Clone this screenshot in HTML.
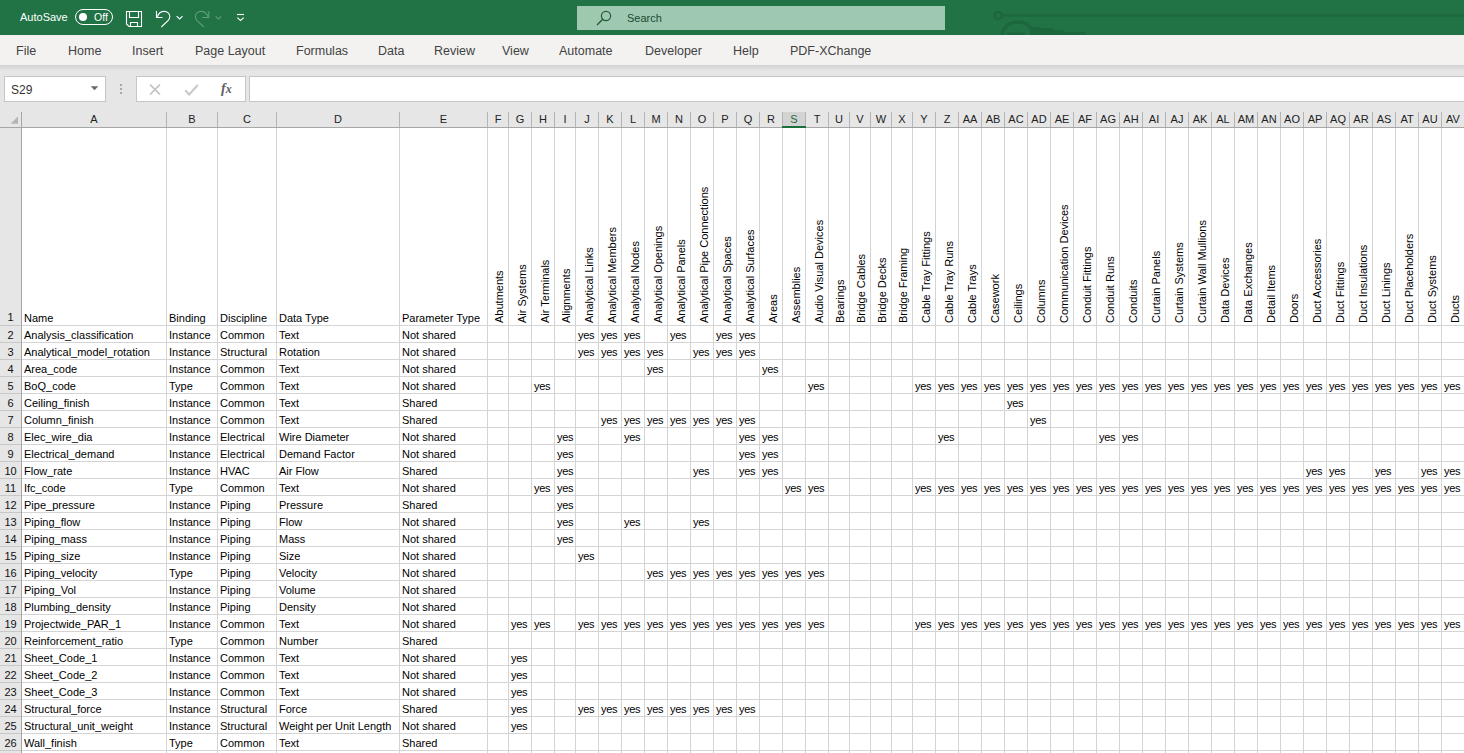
<!DOCTYPE html><html><head><meta charset="utf-8"><style>
*{margin:0;padding:0;box-sizing:border-box}
html,body{width:1464px;height:753px;overflow:hidden;background:#fff;font-family:"Liberation Sans",sans-serif}
.a{position:absolute}
.t{position:absolute;white-space:nowrap;font-size:11px;line-height:17px;color:#000}
.v{position:absolute;white-space:nowrap;font-size:11px;line-height:13px;color:#000;transform:rotate(-90deg);transform-origin:0 0}
.ch{position:absolute;top:112px;height:15px;font-size:11px;line-height:15px;text-align:center;color:#111}
.rn{position:absolute;left:0;width:21px;font-size:11px;line-height:17px;text-align:center;color:#111}
.gv{position:absolute;width:1px;background:#d4d4d4}
.gh{position:absolute;height:1px;background:#d4d4d4}
.menu{position:absolute;top:41px;font-size:12.5px;line-height:20px;color:#424242}
</style></head><body>

<div class="a" style="left:0;top:0;width:1464px;height:35px;background:#217346"></div>
<div class="a" style="left:577px;top:6px;width:368px;height:24px;background:#9fc8b0"></div>
<div class="a" style="left:627px;top:9px;font-size:11px;line-height:19px;color:#1a4a30">Search</div>
<svg class="a" style="left:594px;top:9px" width="20" height="18" viewBox="0 0 20 18"><circle cx="12" cy="7" r="4.6" fill="none" stroke="#1f5a3a" stroke-width="1.2"/><line x1="8.7" y1="10.3" x2="3" y2="16" stroke="#1f5a3a" stroke-width="1.3"/></svg>
<div class="a" style="left:20px;top:8px;font-size:11px;line-height:19px;color:#fff">AutoSave</div>
<div class="a" style="left:75px;top:9px;width:38px;height:16px;border:1px solid #fff;border-radius:8px"></div>
<div class="a" style="left:79px;top:13px;width:8px;height:8px;border-radius:50%;background:#fff"></div>
<div class="a" style="left:94px;top:8px;font-size:10.5px;line-height:19px;color:#fff">Off</div>
<svg class="a" style="left:0;top:0" width="260" height="35" viewBox="0 0 260 35" fill="none" stroke-width="1.1"><g stroke="#fff"><path d="M126.5 11.5H141.5V26.5H129L126.5 24Z"/><path d="M129.5 11.5V17.5H138.5V11.5"/><path d="M130.5 26.5V22.5H137.5V26.5"/><path d="M156.5 11V17.5H162.6"/><path d="M157.3 16.9C158.5 13.2 161.2 11.4 164.2 11.4C167.4 11.4 169.8 13.8 169.8 16.8C169.8 18.5 169 19.6 168 20.7L161.3 27"/><path d="M176.6 16.1L179.6 18.9L182.6 16.1"/><path d="M237 14.5H244"/><path d="M237.3 17.6L240.5 20.5L243.7 17.6"/></g><g stroke="#5f9c79"><path d="M208.8 11.2V17.5H202.1"/><path d="M208 16.9C206.8 13.2 204 11.4 201 11.4C197.8 11.4 195.3 13.8 195.3 16.8C195.3 18.5 196.1 19.6 197.1 20.7L203.8 27"/><path d="M215.6 16.3L218.4 18.9L221.2 16.3"/></g></svg>
<svg class="a" style="left:960px;top:0" width="504" height="35" viewBox="0 0 504 35"><g fill="none" stroke="#1d673e" stroke-width="2.4"><circle cx="38.3" cy="15.6" r="3.5"/><path d="M47 34h18" stroke-width="3"/><line x1="42" y1="15.6" x2="504" y2="15.6"/><path d="M42 36a16 14 0 0 1 32 0" stroke-width="3.4"/></g><path d="M70 27h10v1h14v2h10v2h22v3H70z" fill="#1d673e"/></svg>
<div class="a" style="left:0;top:35px;width:1464px;height:30px;background:#f3f2f1"></div>
<div class="a" style="left:0;top:65px;width:1464px;height:62px;background:#e6e6e6"></div>
<div class="a" style="left:0;top:65px;width:1464px;height:6px;background:linear-gradient(#d2d2d2,#e6e6e6)"></div>
<div class="menu" style="left:16px">File</div>
<div class="menu" style="left:68px">Home</div>
<div class="menu" style="left:132px">Insert</div>
<div class="menu" style="left:195px">Page Layout</div>
<div class="menu" style="left:296px">Formulas</div>
<div class="menu" style="left:378px">Data</div>
<div class="menu" style="left:434px">Review</div>
<div class="menu" style="left:502px">View</div>
<div class="menu" style="left:559px">Automate</div>
<div class="menu" style="left:645px">Developer</div>
<div class="menu" style="left:733px">Help</div>
<div class="menu" style="left:790px">PDF-XChange</div>
<div class="a" style="left:4px;top:76px;width:102px;height:26px;background:#fff;border:1px solid #c6c6c6"></div>
<div class="a" style="left:11px;top:80px;font-size:12px;line-height:20px;color:#333">S29</div>
<svg class="a" style="left:90px;top:86px" width="9" height="5" viewBox="0 0 9 5"><path d="M0.7 0.2h7.6L4.5 4.3z" fill="#6a6a6a"/></svg>
<div class="a" style="left:120px;top:84px;width:2px;height:2px;background:#a8a8a8"></div>
<div class="a" style="left:120px;top:88px;width:2px;height:2px;background:#a8a8a8"></div>
<div class="a" style="left:120px;top:92px;width:2px;height:2px;background:#a8a8a8"></div>
<div class="a" style="left:136px;top:76px;width:110px;height:26px;background:#fff;border:1px solid #c6c6c6"></div>
<svg class="a" style="left:149px;top:84px" width="12" height="11" viewBox="0 0 12 11" fill="none" stroke="#c2c2c2" stroke-width="1.7"><path d="M1 0.5l10 10M11 0.5l-10 10"/></svg>
<svg class="a" style="left:184px;top:84px" width="15" height="12" viewBox="0 0 15 12" fill="none" stroke="#cacaca" stroke-width="2.2"><path d="M1.2 6.2l4 4.3 8.6-9.6"/></svg>
<div class="a" style="left:221px;top:81px;font-family:'Liberation Serif',serif;font-style:italic;font-weight:bold;font-size:14px;line-height:16px;color:#606060">f<span style="font-size:12px">x</span></div>
<div class="a" style="left:249px;top:76px;width:1220px;height:26px;background:#fff;border:1px solid #c6c6c6"></div>
<div class="a" style="left:0;top:127px;width:1464px;height:1px;background:#a6a6a6"></div>
<div class="a" style="left:21px;top:112px;width:1px;height:641px;background:#a6a6a6"></div>
<svg class="a" style="left:10px;top:116px" width="9" height="9" viewBox="0 0 9 9"><path d="M8 0.5V7.7H0.6z" fill="#b4b4b4"/></svg>
<div class="a" style="left:782px;top:112px;width:24px;height:15px;background:#d3d3d3"></div>
<div class="ch" style="left:22px;width:144px;color:#222">A</div>
<div class="a" style="left:166px;top:112px;width:1px;height:15px;background:#b4b4b4"></div>
<div class="ch" style="left:167px;width:50px;color:#222">B</div>
<div class="a" style="left:217px;top:112px;width:1px;height:15px;background:#b4b4b4"></div>
<div class="ch" style="left:218px;width:58px;color:#222">C</div>
<div class="a" style="left:276px;top:112px;width:1px;height:15px;background:#b4b4b4"></div>
<div class="ch" style="left:277px;width:122px;color:#222">D</div>
<div class="a" style="left:399px;top:112px;width:1px;height:15px;background:#b4b4b4"></div>
<div class="ch" style="left:400px;width:87px;color:#222">E</div>
<div class="a" style="left:487px;top:112px;width:1px;height:15px;background:#b4b4b4"></div>
<div class="ch" style="left:488px;width:20px;color:#222">F</div>
<div class="a" style="left:508px;top:112px;width:1px;height:15px;background:#b4b4b4"></div>
<div class="ch" style="left:509px;width:22px;color:#222">G</div>
<div class="a" style="left:531px;top:112px;width:1px;height:15px;background:#b4b4b4"></div>
<div class="ch" style="left:532px;width:22px;color:#222">H</div>
<div class="a" style="left:554px;top:112px;width:1px;height:15px;background:#b4b4b4"></div>
<div class="ch" style="left:555px;width:20px;color:#222">I</div>
<div class="a" style="left:575px;top:112px;width:1px;height:15px;background:#b4b4b4"></div>
<div class="ch" style="left:576px;width:22px;color:#222">J</div>
<div class="a" style="left:598px;top:112px;width:1px;height:15px;background:#b4b4b4"></div>
<div class="ch" style="left:599px;width:22px;color:#222">K</div>
<div class="a" style="left:621px;top:112px;width:1px;height:15px;background:#b4b4b4"></div>
<div class="ch" style="left:622px;width:22px;color:#222">L</div>
<div class="a" style="left:644px;top:112px;width:1px;height:15px;background:#b4b4b4"></div>
<div class="ch" style="left:645px;width:22px;color:#222">M</div>
<div class="a" style="left:667px;top:112px;width:1px;height:15px;background:#b4b4b4"></div>
<div class="ch" style="left:668px;width:22px;color:#222">N</div>
<div class="a" style="left:690px;top:112px;width:1px;height:15px;background:#b4b4b4"></div>
<div class="ch" style="left:691px;width:22px;color:#222">O</div>
<div class="a" style="left:713px;top:112px;width:1px;height:15px;background:#b4b4b4"></div>
<div class="ch" style="left:714px;width:22px;color:#222">P</div>
<div class="a" style="left:736px;top:112px;width:1px;height:15px;background:#b4b4b4"></div>
<div class="ch" style="left:737px;width:22px;color:#222">Q</div>
<div class="a" style="left:759px;top:112px;width:1px;height:15px;background:#b4b4b4"></div>
<div class="ch" style="left:760px;width:22px;color:#222">R</div>
<div class="a" style="left:782px;top:112px;width:1px;height:15px;background:#b4b4b4"></div>
<div class="ch" style="left:783px;width:22px;color:#1e6b3f">S</div>
<div class="a" style="left:805px;top:112px;width:1px;height:15px;background:#b4b4b4"></div>
<div class="ch" style="left:806px;width:22px;color:#222">T</div>
<div class="a" style="left:828px;top:112px;width:1px;height:15px;background:#b4b4b4"></div>
<div class="ch" style="left:829px;width:20px;color:#222">U</div>
<div class="a" style="left:849px;top:112px;width:1px;height:15px;background:#b4b4b4"></div>
<div class="ch" style="left:850px;width:20px;color:#222">V</div>
<div class="a" style="left:870px;top:112px;width:1px;height:15px;background:#b4b4b4"></div>
<div class="ch" style="left:871px;width:20px;color:#222">W</div>
<div class="a" style="left:891px;top:112px;width:1px;height:15px;background:#b4b4b4"></div>
<div class="ch" style="left:892px;width:20px;color:#222">X</div>
<div class="a" style="left:912px;top:112px;width:1px;height:15px;background:#b4b4b4"></div>
<div class="ch" style="left:913px;width:22px;color:#222">Y</div>
<div class="a" style="left:935px;top:112px;width:1px;height:15px;background:#b4b4b4"></div>
<div class="ch" style="left:936px;width:22px;color:#222">Z</div>
<div class="a" style="left:958px;top:112px;width:1px;height:15px;background:#b4b4b4"></div>
<div class="ch" style="left:959px;width:22px;color:#222">AA</div>
<div class="a" style="left:981px;top:112px;width:1px;height:15px;background:#b4b4b4"></div>
<div class="ch" style="left:982px;width:22px;color:#222">AB</div>
<div class="a" style="left:1004px;top:112px;width:1px;height:15px;background:#b4b4b4"></div>
<div class="ch" style="left:1005px;width:22px;color:#222">AC</div>
<div class="a" style="left:1027px;top:112px;width:1px;height:15px;background:#b4b4b4"></div>
<div class="ch" style="left:1028px;width:22px;color:#222">AD</div>
<div class="a" style="left:1050px;top:112px;width:1px;height:15px;background:#b4b4b4"></div>
<div class="ch" style="left:1051px;width:22px;color:#222">AE</div>
<div class="a" style="left:1073px;top:112px;width:1px;height:15px;background:#b4b4b4"></div>
<div class="ch" style="left:1074px;width:22px;color:#222">AF</div>
<div class="a" style="left:1096px;top:112px;width:1px;height:15px;background:#b4b4b4"></div>
<div class="ch" style="left:1097px;width:22px;color:#222">AG</div>
<div class="a" style="left:1119px;top:112px;width:1px;height:15px;background:#b4b4b4"></div>
<div class="ch" style="left:1120px;width:22px;color:#222">AH</div>
<div class="a" style="left:1142px;top:112px;width:1px;height:15px;background:#b4b4b4"></div>
<div class="ch" style="left:1143px;width:22px;color:#222">AI</div>
<div class="a" style="left:1165px;top:112px;width:1px;height:15px;background:#b4b4b4"></div>
<div class="ch" style="left:1166px;width:22px;color:#222">AJ</div>
<div class="a" style="left:1188px;top:112px;width:1px;height:15px;background:#b4b4b4"></div>
<div class="ch" style="left:1189px;width:22px;color:#222">AK</div>
<div class="a" style="left:1211px;top:112px;width:1px;height:15px;background:#b4b4b4"></div>
<div class="ch" style="left:1212px;width:22px;color:#222">AL</div>
<div class="a" style="left:1234px;top:112px;width:1px;height:15px;background:#b4b4b4"></div>
<div class="ch" style="left:1235px;width:22px;color:#222">AM</div>
<div class="a" style="left:1257px;top:112px;width:1px;height:15px;background:#b4b4b4"></div>
<div class="ch" style="left:1258px;width:22px;color:#222">AN</div>
<div class="a" style="left:1280px;top:112px;width:1px;height:15px;background:#b4b4b4"></div>
<div class="ch" style="left:1281px;width:22px;color:#222">AO</div>
<div class="a" style="left:1303px;top:112px;width:1px;height:15px;background:#b4b4b4"></div>
<div class="ch" style="left:1304px;width:22px;color:#222">AP</div>
<div class="a" style="left:1326px;top:112px;width:1px;height:15px;background:#b4b4b4"></div>
<div class="ch" style="left:1327px;width:22px;color:#222">AQ</div>
<div class="a" style="left:1349px;top:112px;width:1px;height:15px;background:#b4b4b4"></div>
<div class="ch" style="left:1350px;width:22px;color:#222">AR</div>
<div class="a" style="left:1372px;top:112px;width:1px;height:15px;background:#b4b4b4"></div>
<div class="ch" style="left:1373px;width:22px;color:#222">AS</div>
<div class="a" style="left:1395px;top:112px;width:1px;height:15px;background:#b4b4b4"></div>
<div class="ch" style="left:1396px;width:22px;color:#222">AT</div>
<div class="a" style="left:1418px;top:112px;width:1px;height:15px;background:#b4b4b4"></div>
<div class="ch" style="left:1419px;width:22px;color:#222">AU</div>
<div class="a" style="left:1441px;top:112px;width:1px;height:15px;background:#b4b4b4"></div>
<div class="ch" style="left:1442px;width:22px;color:#222">AV</div>
<div class="a" style="left:1464px;top:112px;width:1px;height:15px;background:#b4b4b4"></div>
<div class="a" style="left:782px;top:126px;width:24px;height:2px;background:#19703d"></div>
<div class="a" style="left:0;top:128px;width:21px;height:625px;background:#e6e6e6"></div>
<div class="gv" style="left:166px;top:128px;height:625px"></div>
<div class="gv" style="left:217px;top:128px;height:625px"></div>
<div class="gv" style="left:276px;top:128px;height:625px"></div>
<div class="gv" style="left:399px;top:128px;height:625px"></div>
<div class="gv" style="left:487px;top:128px;height:625px"></div>
<div class="gv" style="left:508px;top:128px;height:625px"></div>
<div class="gv" style="left:531px;top:128px;height:625px"></div>
<div class="gv" style="left:554px;top:128px;height:625px"></div>
<div class="gv" style="left:575px;top:128px;height:625px"></div>
<div class="gv" style="left:598px;top:128px;height:625px"></div>
<div class="gv" style="left:621px;top:128px;height:625px"></div>
<div class="gv" style="left:644px;top:128px;height:625px"></div>
<div class="gv" style="left:667px;top:128px;height:625px"></div>
<div class="gv" style="left:690px;top:128px;height:625px"></div>
<div class="gv" style="left:713px;top:128px;height:625px"></div>
<div class="gv" style="left:736px;top:128px;height:625px"></div>
<div class="gv" style="left:759px;top:128px;height:625px"></div>
<div class="gv" style="left:782px;top:128px;height:625px"></div>
<div class="gv" style="left:805px;top:128px;height:625px"></div>
<div class="gv" style="left:828px;top:128px;height:625px"></div>
<div class="gv" style="left:849px;top:128px;height:625px"></div>
<div class="gv" style="left:870px;top:128px;height:625px"></div>
<div class="gv" style="left:891px;top:128px;height:625px"></div>
<div class="gv" style="left:912px;top:128px;height:625px"></div>
<div class="gv" style="left:935px;top:128px;height:625px"></div>
<div class="gv" style="left:958px;top:128px;height:625px"></div>
<div class="gv" style="left:981px;top:128px;height:625px"></div>
<div class="gv" style="left:1004px;top:128px;height:625px"></div>
<div class="gv" style="left:1027px;top:128px;height:625px"></div>
<div class="gv" style="left:1050px;top:128px;height:625px"></div>
<div class="gv" style="left:1073px;top:128px;height:625px"></div>
<div class="gv" style="left:1096px;top:128px;height:625px"></div>
<div class="gv" style="left:1119px;top:128px;height:625px"></div>
<div class="gv" style="left:1142px;top:128px;height:625px"></div>
<div class="gv" style="left:1165px;top:128px;height:625px"></div>
<div class="gv" style="left:1188px;top:128px;height:625px"></div>
<div class="gv" style="left:1211px;top:128px;height:625px"></div>
<div class="gv" style="left:1234px;top:128px;height:625px"></div>
<div class="gv" style="left:1257px;top:128px;height:625px"></div>
<div class="gv" style="left:1280px;top:128px;height:625px"></div>
<div class="gv" style="left:1303px;top:128px;height:625px"></div>
<div class="gv" style="left:1326px;top:128px;height:625px"></div>
<div class="gv" style="left:1349px;top:128px;height:625px"></div>
<div class="gv" style="left:1372px;top:128px;height:625px"></div>
<div class="gv" style="left:1395px;top:128px;height:625px"></div>
<div class="gv" style="left:1418px;top:128px;height:625px"></div>
<div class="gv" style="left:1441px;top:128px;height:625px"></div>
<div class="gh" style="left:22px;top:325px;width:1442px"></div>
<div class="a" style="left:0;top:325px;width:21px;height:1px;background:#c8c8c8"></div>
<div class="gh" style="left:22px;top:342px;width:1442px"></div>
<div class="a" style="left:0;top:342px;width:21px;height:1px;background:#c8c8c8"></div>
<div class="gh" style="left:22px;top:359px;width:1442px"></div>
<div class="a" style="left:0;top:359px;width:21px;height:1px;background:#c8c8c8"></div>
<div class="gh" style="left:22px;top:376px;width:1442px"></div>
<div class="a" style="left:0;top:376px;width:21px;height:1px;background:#c8c8c8"></div>
<div class="gh" style="left:22px;top:393px;width:1442px"></div>
<div class="a" style="left:0;top:393px;width:21px;height:1px;background:#c8c8c8"></div>
<div class="gh" style="left:22px;top:410px;width:1442px"></div>
<div class="a" style="left:0;top:410px;width:21px;height:1px;background:#c8c8c8"></div>
<div class="gh" style="left:22px;top:427px;width:1442px"></div>
<div class="a" style="left:0;top:427px;width:21px;height:1px;background:#c8c8c8"></div>
<div class="gh" style="left:22px;top:444px;width:1442px"></div>
<div class="a" style="left:0;top:444px;width:21px;height:1px;background:#c8c8c8"></div>
<div class="gh" style="left:22px;top:461px;width:1442px"></div>
<div class="a" style="left:0;top:461px;width:21px;height:1px;background:#c8c8c8"></div>
<div class="gh" style="left:22px;top:478px;width:1442px"></div>
<div class="a" style="left:0;top:478px;width:21px;height:1px;background:#c8c8c8"></div>
<div class="gh" style="left:22px;top:495px;width:1442px"></div>
<div class="a" style="left:0;top:495px;width:21px;height:1px;background:#c8c8c8"></div>
<div class="gh" style="left:22px;top:512px;width:1442px"></div>
<div class="a" style="left:0;top:512px;width:21px;height:1px;background:#c8c8c8"></div>
<div class="gh" style="left:22px;top:529px;width:1442px"></div>
<div class="a" style="left:0;top:529px;width:21px;height:1px;background:#c8c8c8"></div>
<div class="gh" style="left:22px;top:546px;width:1442px"></div>
<div class="a" style="left:0;top:546px;width:21px;height:1px;background:#c8c8c8"></div>
<div class="gh" style="left:22px;top:563px;width:1442px"></div>
<div class="a" style="left:0;top:563px;width:21px;height:1px;background:#c8c8c8"></div>
<div class="gh" style="left:22px;top:580px;width:1442px"></div>
<div class="a" style="left:0;top:580px;width:21px;height:1px;background:#c8c8c8"></div>
<div class="gh" style="left:22px;top:597px;width:1442px"></div>
<div class="a" style="left:0;top:597px;width:21px;height:1px;background:#c8c8c8"></div>
<div class="gh" style="left:22px;top:614px;width:1442px"></div>
<div class="a" style="left:0;top:614px;width:21px;height:1px;background:#c8c8c8"></div>
<div class="gh" style="left:22px;top:631px;width:1442px"></div>
<div class="a" style="left:0;top:631px;width:21px;height:1px;background:#c8c8c8"></div>
<div class="gh" style="left:22px;top:648px;width:1442px"></div>
<div class="a" style="left:0;top:648px;width:21px;height:1px;background:#c8c8c8"></div>
<div class="gh" style="left:22px;top:665px;width:1442px"></div>
<div class="a" style="left:0;top:665px;width:21px;height:1px;background:#c8c8c8"></div>
<div class="gh" style="left:22px;top:682px;width:1442px"></div>
<div class="a" style="left:0;top:682px;width:21px;height:1px;background:#c8c8c8"></div>
<div class="gh" style="left:22px;top:699px;width:1442px"></div>
<div class="a" style="left:0;top:699px;width:21px;height:1px;background:#c8c8c8"></div>
<div class="gh" style="left:22px;top:716px;width:1442px"></div>
<div class="a" style="left:0;top:716px;width:21px;height:1px;background:#c8c8c8"></div>
<div class="gh" style="left:22px;top:733px;width:1442px"></div>
<div class="a" style="left:0;top:733px;width:21px;height:1px;background:#c8c8c8"></div>
<div class="gh" style="left:22px;top:750px;width:1442px"></div>
<div class="a" style="left:0;top:750px;width:21px;height:1px;background:#c8c8c8"></div>
<div class="rn" style="top:309px">1</div>
<div class="rn" style="top:327px">2</div>
<div class="rn" style="top:344px">3</div>
<div class="rn" style="top:361px">4</div>
<div class="rn" style="top:378px">5</div>
<div class="rn" style="top:395px">6</div>
<div class="rn" style="top:412px">7</div>
<div class="rn" style="top:429px">8</div>
<div class="rn" style="top:446px">9</div>
<div class="rn" style="top:463px">10</div>
<div class="rn" style="top:480px">11</div>
<div class="rn" style="top:497px">12</div>
<div class="rn" style="top:514px">13</div>
<div class="rn" style="top:531px">14</div>
<div class="rn" style="top:548px">15</div>
<div class="rn" style="top:565px">16</div>
<div class="rn" style="top:582px">17</div>
<div class="rn" style="top:599px">18</div>
<div class="rn" style="top:616px">19</div>
<div class="rn" style="top:633px">20</div>
<div class="rn" style="top:650px">21</div>
<div class="rn" style="top:667px">22</div>
<div class="rn" style="top:684px">23</div>
<div class="rn" style="top:701px">24</div>
<div class="rn" style="top:718px">25</div>
<div class="rn" style="top:735px">26</div>
<div class="rn" style="top:752px">27</div>
<div class="t" style="left:24px;top:310px">Name</div>
<div class="t" style="left:169px;top:310px">Binding</div>
<div class="t" style="left:220px;top:310px">Discipline</div>
<div class="t" style="left:279px;top:310px">Data Type</div>
<div class="t" style="left:402px;top:310px">Parameter Type</div>
<div class="v" style="left:493px;top:323px">Abutments</div>
<div class="v" style="left:516px;top:323px">Air Systems</div>
<div class="v" style="left:539px;top:323px">Air Terminals</div>
<div class="v" style="left:560px;top:323px">Alignments</div>
<div class="v" style="left:583px;top:323px">Analytical Links</div>
<div class="v" style="left:606px;top:323px">Analytical Members</div>
<div class="v" style="left:629px;top:323px">Analytical Nodes</div>
<div class="v" style="left:652px;top:323px">Analytical Openings</div>
<div class="v" style="left:675px;top:323px">Analytical Panels</div>
<div class="v" style="left:698px;top:323px">Analytical Pipe Connections</div>
<div class="v" style="left:721px;top:323px">Analytical Spaces</div>
<div class="v" style="left:744px;top:323px">Analytical Surfaces</div>
<div class="v" style="left:767px;top:323px">Areas</div>
<div class="v" style="left:790px;top:323px">Assemblies</div>
<div class="v" style="left:813px;top:323px">Audio Visual Devices</div>
<div class="v" style="left:834px;top:323px">Bearings</div>
<div class="v" style="left:855px;top:323px">Bridge Cables</div>
<div class="v" style="left:876px;top:323px">Bridge Decks</div>
<div class="v" style="left:897px;top:323px">Bridge Framing</div>
<div class="v" style="left:920px;top:323px">Cable Tray Fittings</div>
<div class="v" style="left:943px;top:323px">Cable Tray Runs</div>
<div class="v" style="left:966px;top:323px">Cable Trays</div>
<div class="v" style="left:989px;top:323px">Casework</div>
<div class="v" style="left:1012px;top:323px">Ceilings</div>
<div class="v" style="left:1035px;top:323px">Columns</div>
<div class="v" style="left:1058px;top:323px">Communication Devices</div>
<div class="v" style="left:1081px;top:323px">Conduit Fittings</div>
<div class="v" style="left:1104px;top:323px">Conduit Runs</div>
<div class="v" style="left:1127px;top:323px">Conduits</div>
<div class="v" style="left:1150px;top:323px">Curtain Panels</div>
<div class="v" style="left:1173px;top:323px">Curtain Systems</div>
<div class="v" style="left:1196px;top:323px">Curtain Wall Mullions</div>
<div class="v" style="left:1219px;top:323px">Data Devices</div>
<div class="v" style="left:1242px;top:323px">Data Exchanges</div>
<div class="v" style="left:1265px;top:323px">Detail Items</div>
<div class="v" style="left:1288px;top:323px">Doors</div>
<div class="v" style="left:1311px;top:323px">Duct Accessories</div>
<div class="v" style="left:1334px;top:323px">Duct Fittings</div>
<div class="v" style="left:1357px;top:323px">Duct Insulations</div>
<div class="v" style="left:1380px;top:323px">Duct Linings</div>
<div class="v" style="left:1403px;top:323px">Duct Placeholders</div>
<div class="v" style="left:1426px;top:323px">Duct Systems</div>
<div class="v" style="left:1449px;top:323px">Ducts</div>
<div class="t" style="left:24px;top:327px">Analysis_classification</div>
<div class="t" style="left:169px;top:327px">Instance</div>
<div class="t" style="left:220px;top:327px">Common</div>
<div class="t" style="left:279px;top:327px">Text</div>
<div class="t" style="left:402px;top:327px">Not shared</div>
<div class="t" style="left:578px;top:327px;letter-spacing:-0.3px">yes</div>
<div class="t" style="left:601px;top:327px;letter-spacing:-0.3px">yes</div>
<div class="t" style="left:624px;top:327px;letter-spacing:-0.3px">yes</div>
<div class="t" style="left:670px;top:327px;letter-spacing:-0.3px">yes</div>
<div class="t" style="left:716px;top:327px;letter-spacing:-0.3px">yes</div>
<div class="t" style="left:739px;top:327px;letter-spacing:-0.3px">yes</div>
<div class="t" style="left:24px;top:344px">Analytical_model_rotation</div>
<div class="t" style="left:169px;top:344px">Instance</div>
<div class="t" style="left:220px;top:344px">Structural</div>
<div class="t" style="left:279px;top:344px">Rotation</div>
<div class="t" style="left:402px;top:344px">Not shared</div>
<div class="t" style="left:578px;top:344px;letter-spacing:-0.3px">yes</div>
<div class="t" style="left:601px;top:344px;letter-spacing:-0.3px">yes</div>
<div class="t" style="left:624px;top:344px;letter-spacing:-0.3px">yes</div>
<div class="t" style="left:647px;top:344px;letter-spacing:-0.3px">yes</div>
<div class="t" style="left:693px;top:344px;letter-spacing:-0.3px">yes</div>
<div class="t" style="left:716px;top:344px;letter-spacing:-0.3px">yes</div>
<div class="t" style="left:739px;top:344px;letter-spacing:-0.3px">yes</div>
<div class="t" style="left:24px;top:361px">Area_code</div>
<div class="t" style="left:169px;top:361px">Instance</div>
<div class="t" style="left:220px;top:361px">Common</div>
<div class="t" style="left:279px;top:361px">Text</div>
<div class="t" style="left:402px;top:361px">Not shared</div>
<div class="t" style="left:647px;top:361px;letter-spacing:-0.3px">yes</div>
<div class="t" style="left:762px;top:361px;letter-spacing:-0.3px">yes</div>
<div class="t" style="left:24px;top:378px">BoQ_code</div>
<div class="t" style="left:169px;top:378px">Type</div>
<div class="t" style="left:220px;top:378px">Common</div>
<div class="t" style="left:279px;top:378px">Text</div>
<div class="t" style="left:402px;top:378px">Not shared</div>
<div class="t" style="left:534px;top:378px;letter-spacing:-0.3px">yes</div>
<div class="t" style="left:808px;top:378px;letter-spacing:-0.3px">yes</div>
<div class="t" style="left:915px;top:378px;letter-spacing:-0.3px">yes</div>
<div class="t" style="left:938px;top:378px;letter-spacing:-0.3px">yes</div>
<div class="t" style="left:961px;top:378px;letter-spacing:-0.3px">yes</div>
<div class="t" style="left:984px;top:378px;letter-spacing:-0.3px">yes</div>
<div class="t" style="left:1007px;top:378px;letter-spacing:-0.3px">yes</div>
<div class="t" style="left:1030px;top:378px;letter-spacing:-0.3px">yes</div>
<div class="t" style="left:1053px;top:378px;letter-spacing:-0.3px">yes</div>
<div class="t" style="left:1076px;top:378px;letter-spacing:-0.3px">yes</div>
<div class="t" style="left:1099px;top:378px;letter-spacing:-0.3px">yes</div>
<div class="t" style="left:1122px;top:378px;letter-spacing:-0.3px">yes</div>
<div class="t" style="left:1145px;top:378px;letter-spacing:-0.3px">yes</div>
<div class="t" style="left:1168px;top:378px;letter-spacing:-0.3px">yes</div>
<div class="t" style="left:1191px;top:378px;letter-spacing:-0.3px">yes</div>
<div class="t" style="left:1214px;top:378px;letter-spacing:-0.3px">yes</div>
<div class="t" style="left:1237px;top:378px;letter-spacing:-0.3px">yes</div>
<div class="t" style="left:1260px;top:378px;letter-spacing:-0.3px">yes</div>
<div class="t" style="left:1283px;top:378px;letter-spacing:-0.3px">yes</div>
<div class="t" style="left:1306px;top:378px;letter-spacing:-0.3px">yes</div>
<div class="t" style="left:1329px;top:378px;letter-spacing:-0.3px">yes</div>
<div class="t" style="left:1352px;top:378px;letter-spacing:-0.3px">yes</div>
<div class="t" style="left:1375px;top:378px;letter-spacing:-0.3px">yes</div>
<div class="t" style="left:1398px;top:378px;letter-spacing:-0.3px">yes</div>
<div class="t" style="left:1421px;top:378px;letter-spacing:-0.3px">yes</div>
<div class="t" style="left:1444px;top:378px;letter-spacing:-0.3px">yes</div>
<div class="t" style="left:24px;top:395px">Ceiling_finish</div>
<div class="t" style="left:169px;top:395px">Instance</div>
<div class="t" style="left:220px;top:395px">Common</div>
<div class="t" style="left:279px;top:395px">Text</div>
<div class="t" style="left:402px;top:395px">Shared</div>
<div class="t" style="left:1007px;top:395px;letter-spacing:-0.3px">yes</div>
<div class="t" style="left:24px;top:412px">Column_finish</div>
<div class="t" style="left:169px;top:412px">Instance</div>
<div class="t" style="left:220px;top:412px">Common</div>
<div class="t" style="left:279px;top:412px">Text</div>
<div class="t" style="left:402px;top:412px">Shared</div>
<div class="t" style="left:601px;top:412px;letter-spacing:-0.3px">yes</div>
<div class="t" style="left:624px;top:412px;letter-spacing:-0.3px">yes</div>
<div class="t" style="left:647px;top:412px;letter-spacing:-0.3px">yes</div>
<div class="t" style="left:670px;top:412px;letter-spacing:-0.3px">yes</div>
<div class="t" style="left:693px;top:412px;letter-spacing:-0.3px">yes</div>
<div class="t" style="left:716px;top:412px;letter-spacing:-0.3px">yes</div>
<div class="t" style="left:739px;top:412px;letter-spacing:-0.3px">yes</div>
<div class="t" style="left:1030px;top:412px;letter-spacing:-0.3px">yes</div>
<div class="t" style="left:24px;top:429px">Elec_wire_dia</div>
<div class="t" style="left:169px;top:429px">Instance</div>
<div class="t" style="left:220px;top:429px">Electrical</div>
<div class="t" style="left:279px;top:429px">Wire Diameter</div>
<div class="t" style="left:402px;top:429px">Not shared</div>
<div class="t" style="left:557px;top:429px;letter-spacing:-0.3px">yes</div>
<div class="t" style="left:624px;top:429px;letter-spacing:-0.3px">yes</div>
<div class="t" style="left:739px;top:429px;letter-spacing:-0.3px">yes</div>
<div class="t" style="left:762px;top:429px;letter-spacing:-0.3px">yes</div>
<div class="t" style="left:938px;top:429px;letter-spacing:-0.3px">yes</div>
<div class="t" style="left:1099px;top:429px;letter-spacing:-0.3px">yes</div>
<div class="t" style="left:1122px;top:429px;letter-spacing:-0.3px">yes</div>
<div class="t" style="left:24px;top:446px">Electrical_demand</div>
<div class="t" style="left:169px;top:446px">Instance</div>
<div class="t" style="left:220px;top:446px">Electrical</div>
<div class="t" style="left:279px;top:446px">Demand Factor</div>
<div class="t" style="left:402px;top:446px">Not shared</div>
<div class="t" style="left:557px;top:446px;letter-spacing:-0.3px">yes</div>
<div class="t" style="left:739px;top:446px;letter-spacing:-0.3px">yes</div>
<div class="t" style="left:762px;top:446px;letter-spacing:-0.3px">yes</div>
<div class="t" style="left:24px;top:463px">Flow_rate</div>
<div class="t" style="left:169px;top:463px">Instance</div>
<div class="t" style="left:220px;top:463px">HVAC</div>
<div class="t" style="left:279px;top:463px">Air Flow</div>
<div class="t" style="left:402px;top:463px">Shared</div>
<div class="t" style="left:557px;top:463px;letter-spacing:-0.3px">yes</div>
<div class="t" style="left:693px;top:463px;letter-spacing:-0.3px">yes</div>
<div class="t" style="left:739px;top:463px;letter-spacing:-0.3px">yes</div>
<div class="t" style="left:762px;top:463px;letter-spacing:-0.3px">yes</div>
<div class="t" style="left:1306px;top:463px;letter-spacing:-0.3px">yes</div>
<div class="t" style="left:1329px;top:463px;letter-spacing:-0.3px">yes</div>
<div class="t" style="left:1375px;top:463px;letter-spacing:-0.3px">yes</div>
<div class="t" style="left:1421px;top:463px;letter-spacing:-0.3px">yes</div>
<div class="t" style="left:1444px;top:463px;letter-spacing:-0.3px">yes</div>
<div class="t" style="left:24px;top:480px">Ifc_code</div>
<div class="t" style="left:169px;top:480px">Type</div>
<div class="t" style="left:220px;top:480px">Common</div>
<div class="t" style="left:279px;top:480px">Text</div>
<div class="t" style="left:402px;top:480px">Not shared</div>
<div class="t" style="left:534px;top:480px;letter-spacing:-0.3px">yes</div>
<div class="t" style="left:557px;top:480px;letter-spacing:-0.3px">yes</div>
<div class="t" style="left:785px;top:480px;letter-spacing:-0.3px">yes</div>
<div class="t" style="left:808px;top:480px;letter-spacing:-0.3px">yes</div>
<div class="t" style="left:915px;top:480px;letter-spacing:-0.3px">yes</div>
<div class="t" style="left:938px;top:480px;letter-spacing:-0.3px">yes</div>
<div class="t" style="left:961px;top:480px;letter-spacing:-0.3px">yes</div>
<div class="t" style="left:984px;top:480px;letter-spacing:-0.3px">yes</div>
<div class="t" style="left:1007px;top:480px;letter-spacing:-0.3px">yes</div>
<div class="t" style="left:1030px;top:480px;letter-spacing:-0.3px">yes</div>
<div class="t" style="left:1053px;top:480px;letter-spacing:-0.3px">yes</div>
<div class="t" style="left:1076px;top:480px;letter-spacing:-0.3px">yes</div>
<div class="t" style="left:1099px;top:480px;letter-spacing:-0.3px">yes</div>
<div class="t" style="left:1122px;top:480px;letter-spacing:-0.3px">yes</div>
<div class="t" style="left:1145px;top:480px;letter-spacing:-0.3px">yes</div>
<div class="t" style="left:1168px;top:480px;letter-spacing:-0.3px">yes</div>
<div class="t" style="left:1191px;top:480px;letter-spacing:-0.3px">yes</div>
<div class="t" style="left:1214px;top:480px;letter-spacing:-0.3px">yes</div>
<div class="t" style="left:1237px;top:480px;letter-spacing:-0.3px">yes</div>
<div class="t" style="left:1260px;top:480px;letter-spacing:-0.3px">yes</div>
<div class="t" style="left:1283px;top:480px;letter-spacing:-0.3px">yes</div>
<div class="t" style="left:1306px;top:480px;letter-spacing:-0.3px">yes</div>
<div class="t" style="left:1329px;top:480px;letter-spacing:-0.3px">yes</div>
<div class="t" style="left:1352px;top:480px;letter-spacing:-0.3px">yes</div>
<div class="t" style="left:1375px;top:480px;letter-spacing:-0.3px">yes</div>
<div class="t" style="left:1398px;top:480px;letter-spacing:-0.3px">yes</div>
<div class="t" style="left:1421px;top:480px;letter-spacing:-0.3px">yes</div>
<div class="t" style="left:1444px;top:480px;letter-spacing:-0.3px">yes</div>
<div class="t" style="left:24px;top:497px">Pipe_pressure</div>
<div class="t" style="left:169px;top:497px">Instance</div>
<div class="t" style="left:220px;top:497px">Piping</div>
<div class="t" style="left:279px;top:497px">Pressure</div>
<div class="t" style="left:402px;top:497px">Shared</div>
<div class="t" style="left:557px;top:497px;letter-spacing:-0.3px">yes</div>
<div class="t" style="left:24px;top:514px">Piping_flow</div>
<div class="t" style="left:169px;top:514px">Instance</div>
<div class="t" style="left:220px;top:514px">Piping</div>
<div class="t" style="left:279px;top:514px">Flow</div>
<div class="t" style="left:402px;top:514px">Not shared</div>
<div class="t" style="left:557px;top:514px;letter-spacing:-0.3px">yes</div>
<div class="t" style="left:624px;top:514px;letter-spacing:-0.3px">yes</div>
<div class="t" style="left:693px;top:514px;letter-spacing:-0.3px">yes</div>
<div class="t" style="left:24px;top:531px">Piping_mass</div>
<div class="t" style="left:169px;top:531px">Instance</div>
<div class="t" style="left:220px;top:531px">Piping</div>
<div class="t" style="left:279px;top:531px">Mass</div>
<div class="t" style="left:402px;top:531px">Not shared</div>
<div class="t" style="left:557px;top:531px;letter-spacing:-0.3px">yes</div>
<div class="t" style="left:24px;top:548px">Piping_size</div>
<div class="t" style="left:169px;top:548px">Instance</div>
<div class="t" style="left:220px;top:548px">Piping</div>
<div class="t" style="left:279px;top:548px">Size</div>
<div class="t" style="left:402px;top:548px">Not shared</div>
<div class="t" style="left:578px;top:548px;letter-spacing:-0.3px">yes</div>
<div class="t" style="left:24px;top:565px">Piping_velocity</div>
<div class="t" style="left:169px;top:565px">Type</div>
<div class="t" style="left:220px;top:565px">Piping</div>
<div class="t" style="left:279px;top:565px">Velocity</div>
<div class="t" style="left:402px;top:565px">Not shared</div>
<div class="t" style="left:647px;top:565px;letter-spacing:-0.3px">yes</div>
<div class="t" style="left:670px;top:565px;letter-spacing:-0.3px">yes</div>
<div class="t" style="left:693px;top:565px;letter-spacing:-0.3px">yes</div>
<div class="t" style="left:716px;top:565px;letter-spacing:-0.3px">yes</div>
<div class="t" style="left:739px;top:565px;letter-spacing:-0.3px">yes</div>
<div class="t" style="left:762px;top:565px;letter-spacing:-0.3px">yes</div>
<div class="t" style="left:785px;top:565px;letter-spacing:-0.3px">yes</div>
<div class="t" style="left:808px;top:565px;letter-spacing:-0.3px">yes</div>
<div class="t" style="left:24px;top:582px">Piping_Vol</div>
<div class="t" style="left:169px;top:582px">Instance</div>
<div class="t" style="left:220px;top:582px">Piping</div>
<div class="t" style="left:279px;top:582px">Volume</div>
<div class="t" style="left:402px;top:582px">Not shared</div>
<div class="t" style="left:24px;top:599px">Plumbing_density</div>
<div class="t" style="left:169px;top:599px">Instance</div>
<div class="t" style="left:220px;top:599px">Piping</div>
<div class="t" style="left:279px;top:599px">Density</div>
<div class="t" style="left:402px;top:599px">Not shared</div>
<div class="t" style="left:24px;top:616px">Projectwide_PAR_1</div>
<div class="t" style="left:169px;top:616px">Instance</div>
<div class="t" style="left:220px;top:616px">Common</div>
<div class="t" style="left:279px;top:616px">Text</div>
<div class="t" style="left:402px;top:616px">Not shared</div>
<div class="t" style="left:511px;top:616px;letter-spacing:-0.3px">yes</div>
<div class="t" style="left:534px;top:616px;letter-spacing:-0.3px">yes</div>
<div class="t" style="left:578px;top:616px;letter-spacing:-0.3px">yes</div>
<div class="t" style="left:601px;top:616px;letter-spacing:-0.3px">yes</div>
<div class="t" style="left:624px;top:616px;letter-spacing:-0.3px">yes</div>
<div class="t" style="left:647px;top:616px;letter-spacing:-0.3px">yes</div>
<div class="t" style="left:670px;top:616px;letter-spacing:-0.3px">yes</div>
<div class="t" style="left:693px;top:616px;letter-spacing:-0.3px">yes</div>
<div class="t" style="left:716px;top:616px;letter-spacing:-0.3px">yes</div>
<div class="t" style="left:739px;top:616px;letter-spacing:-0.3px">yes</div>
<div class="t" style="left:762px;top:616px;letter-spacing:-0.3px">yes</div>
<div class="t" style="left:785px;top:616px;letter-spacing:-0.3px">yes</div>
<div class="t" style="left:808px;top:616px;letter-spacing:-0.3px">yes</div>
<div class="t" style="left:915px;top:616px;letter-spacing:-0.3px">yes</div>
<div class="t" style="left:938px;top:616px;letter-spacing:-0.3px">yes</div>
<div class="t" style="left:961px;top:616px;letter-spacing:-0.3px">yes</div>
<div class="t" style="left:984px;top:616px;letter-spacing:-0.3px">yes</div>
<div class="t" style="left:1007px;top:616px;letter-spacing:-0.3px">yes</div>
<div class="t" style="left:1030px;top:616px;letter-spacing:-0.3px">yes</div>
<div class="t" style="left:1053px;top:616px;letter-spacing:-0.3px">yes</div>
<div class="t" style="left:1076px;top:616px;letter-spacing:-0.3px">yes</div>
<div class="t" style="left:1099px;top:616px;letter-spacing:-0.3px">yes</div>
<div class="t" style="left:1122px;top:616px;letter-spacing:-0.3px">yes</div>
<div class="t" style="left:1145px;top:616px;letter-spacing:-0.3px">yes</div>
<div class="t" style="left:1168px;top:616px;letter-spacing:-0.3px">yes</div>
<div class="t" style="left:1191px;top:616px;letter-spacing:-0.3px">yes</div>
<div class="t" style="left:1214px;top:616px;letter-spacing:-0.3px">yes</div>
<div class="t" style="left:1237px;top:616px;letter-spacing:-0.3px">yes</div>
<div class="t" style="left:1260px;top:616px;letter-spacing:-0.3px">yes</div>
<div class="t" style="left:1283px;top:616px;letter-spacing:-0.3px">yes</div>
<div class="t" style="left:1306px;top:616px;letter-spacing:-0.3px">yes</div>
<div class="t" style="left:1329px;top:616px;letter-spacing:-0.3px">yes</div>
<div class="t" style="left:1352px;top:616px;letter-spacing:-0.3px">yes</div>
<div class="t" style="left:1375px;top:616px;letter-spacing:-0.3px">yes</div>
<div class="t" style="left:1398px;top:616px;letter-spacing:-0.3px">yes</div>
<div class="t" style="left:1421px;top:616px;letter-spacing:-0.3px">yes</div>
<div class="t" style="left:1444px;top:616px;letter-spacing:-0.3px">yes</div>
<div class="t" style="left:24px;top:633px">Reinforcement_ratio</div>
<div class="t" style="left:169px;top:633px">Type</div>
<div class="t" style="left:220px;top:633px">Common</div>
<div class="t" style="left:279px;top:633px">Number</div>
<div class="t" style="left:402px;top:633px">Shared</div>
<div class="t" style="left:24px;top:650px">Sheet_Code_1</div>
<div class="t" style="left:169px;top:650px">Instance</div>
<div class="t" style="left:220px;top:650px">Common</div>
<div class="t" style="left:279px;top:650px">Text</div>
<div class="t" style="left:402px;top:650px">Not shared</div>
<div class="t" style="left:511px;top:650px;letter-spacing:-0.3px">yes</div>
<div class="t" style="left:24px;top:667px">Sheet_Code_2</div>
<div class="t" style="left:169px;top:667px">Instance</div>
<div class="t" style="left:220px;top:667px">Common</div>
<div class="t" style="left:279px;top:667px">Text</div>
<div class="t" style="left:402px;top:667px">Not shared</div>
<div class="t" style="left:511px;top:667px;letter-spacing:-0.3px">yes</div>
<div class="t" style="left:24px;top:684px">Sheet_Code_3</div>
<div class="t" style="left:169px;top:684px">Instance</div>
<div class="t" style="left:220px;top:684px">Common</div>
<div class="t" style="left:279px;top:684px">Text</div>
<div class="t" style="left:402px;top:684px">Not shared</div>
<div class="t" style="left:511px;top:684px;letter-spacing:-0.3px">yes</div>
<div class="t" style="left:24px;top:701px">Structural_force</div>
<div class="t" style="left:169px;top:701px">Instance</div>
<div class="t" style="left:220px;top:701px">Structural</div>
<div class="t" style="left:279px;top:701px">Force</div>
<div class="t" style="left:402px;top:701px">Shared</div>
<div class="t" style="left:511px;top:701px;letter-spacing:-0.3px">yes</div>
<div class="t" style="left:578px;top:701px;letter-spacing:-0.3px">yes</div>
<div class="t" style="left:601px;top:701px;letter-spacing:-0.3px">yes</div>
<div class="t" style="left:624px;top:701px;letter-spacing:-0.3px">yes</div>
<div class="t" style="left:647px;top:701px;letter-spacing:-0.3px">yes</div>
<div class="t" style="left:670px;top:701px;letter-spacing:-0.3px">yes</div>
<div class="t" style="left:693px;top:701px;letter-spacing:-0.3px">yes</div>
<div class="t" style="left:716px;top:701px;letter-spacing:-0.3px">yes</div>
<div class="t" style="left:739px;top:701px;letter-spacing:-0.3px">yes</div>
<div class="t" style="left:24px;top:718px">Structural_unit_weight</div>
<div class="t" style="left:169px;top:718px">Instance</div>
<div class="t" style="left:220px;top:718px">Structural</div>
<div class="t" style="left:279px;top:718px">Weight per Unit Length</div>
<div class="t" style="left:402px;top:718px">Not shared</div>
<div class="t" style="left:511px;top:718px;letter-spacing:-0.3px">yes</div>
<div class="t" style="left:24px;top:735px">Wall_finish</div>
<div class="t" style="left:169px;top:735px">Type</div>
<div class="t" style="left:220px;top:735px">Common</div>
<div class="t" style="left:279px;top:735px">Text</div>
<div class="t" style="left:402px;top:735px">Shared</div>
</body></html>
